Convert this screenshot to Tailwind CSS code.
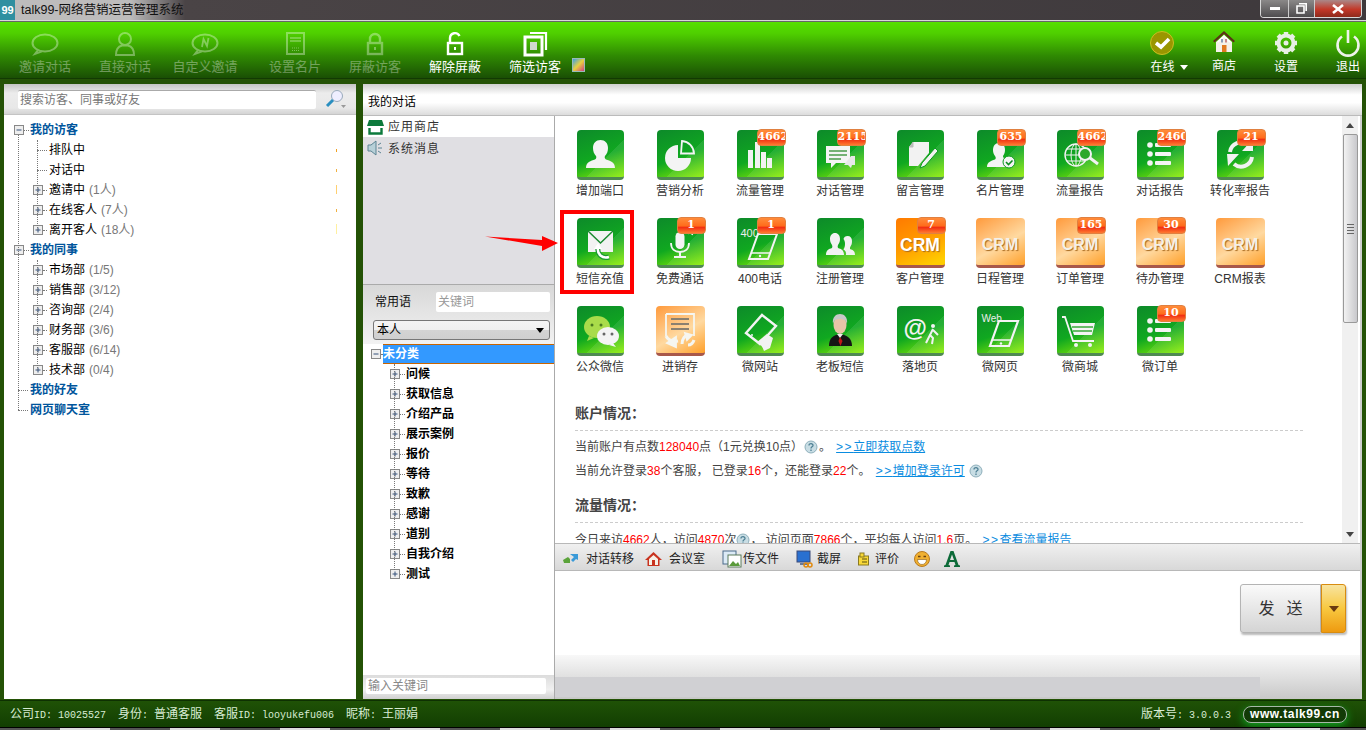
<!DOCTYPE html>
<html lang="zh-CN">
<head>
<meta charset="UTF-8">
<title>talk99-网络营销运营管理系统</title>
<script src="https://cdn.jsdelivr.net/npm/@tailwindcss/browser@4"></script>
</head>
<body class="w-[1366px] h-[730px] overflow-hidden flex flex-col bg-[#245206] text-[12px] text-black [font-family:'Liberation_Sans','Noto_Sans_CJK_SC',sans-serif]">

<svg class="hidden">
  <symbol id="plus" viewBox="0 0 10 10"><rect x=".5" y=".5" width="9" height="9" fill="#eee" stroke="#888"/><path d="M2.5 5h5M5 2.5v5" stroke="#35507a"/></symbol>
  <symbol id="minus" viewBox="0 0 10 10"><rect x=".5" y=".5" width="9" height="9" fill="#eee" stroke="#888"/><path d="M2.5 5h5" stroke="#35507a"/></symbol>
  <symbol id="help" viewBox="0 0 14 14"><circle cx="7" cy="7" r="6" fill="#c8dde4" stroke="#8fb0bc"/><path d="M5 5.400c0-2.400 4.200-2.200 4 .1-.1 1.400-2 1.300-2 2.900M7 9.600v1.500" fill="none" stroke="#4d7f93" stroke-width="1.300"/></symbol>
  <symbol id="list" viewBox="0 0 47 47"><g fill="#f4f4f4"><circle cx="13" cy="15" r="2.800"/><rect x="18" y="13" width="16" height="4" rx="1"/><circle cx="13" cy="24" r="2.800"/><rect x="18" y="22" width="16" height="4" rx="1"/><circle cx="13" cy="33" r="2.800"/><rect x="18" y="31" width="16" height="4" rx="1"/></g></symbol>
</svg>

<!-- title bar -->
<div class="h-[20px] flex items-start bg-[linear-gradient(90deg,#bdbcbc_0,#bdbcbc_130px,#4a4446_185px,#3e393c_100%)]">
  <div class="w-[15px] h-[20px] bg-[#2f8fa0] text-white text-[11px] font-bold leading-[20px] text-center">99</div>
  <div class="ml-[6px] leading-[20px] text-[12.5px] text-[#111]">talk99-网络营销运营管理系统</div>
  <div class="ml-auto mr-[4px] flex h-[18px] rounded-b-[4px] border border-t-0 border-[#d8d8d8] overflow-hidden">
    <div class="w-[28px] flex items-center justify-center bg-[linear-gradient(#8a8888,#4f4d4f)] border-r border-[#ccc]"><span class="w-[10px] h-[3px] bg-white"></span></div>
    <div class="w-[26px] flex items-center justify-center bg-[linear-gradient(#8a8888,#4f4d4f)] border-r border-[#ccc]">
      <svg width="11" height="11" viewBox="0 0 11 11"><path d="M3 .8h7.200v7.200M1 3h7v7H1z" fill="none" stroke="#fff" stroke-width="1.600"/></svg>
    </div>
    <div class="w-[46px] flex items-center justify-center bg-[linear-gradient(#a88,#c33828_55%,#8e2a1c)]">
      <svg width="14" height="10" viewBox="0 0 14 10"><path d="M2 1l10 8M12 1L2 9" stroke="#fff" stroke-width="2.600"/></svg>
    </div>
  </div>
</div>
<div class="h-[2px] bg-[#d8d8d8] border-b border-[#666]"></div>

<!-- toolbar -->
<div class="h-[57px] flex pl-[5px] overflow-hidden text-white text-[13px] leading-[14px] bg-[linear-gradient(#56e000_0%,#4fd000_20%,#2f8a02_60%,#1a4f04_100%)] border-b border-[#123a03]">
  <div class="w-[80px] pt-[6px] flex flex-col items-center opacity-35">
    <svg width="32" height="32" viewBox="0 0 32 32" fill="none" stroke="#fff" stroke-width="2"><ellipse cx="16" cy="15" rx="12.500" ry="8.500"/><path d="M9 22l-3 4 7-2.600"/></svg>
    <span>邀请对话</span>
  </div>
  <div class="w-[80px] pt-[6px] flex flex-col items-center opacity-35">
    <svg width="32" height="32" viewBox="0 0 32 32" fill="none" stroke="#fff" stroke-width="2"><circle cx="16" cy="11" r="6"/><path d="M7 27c0-7 4-9 6-9.500h6c2 .5 6 2.500 6 9.500z"/></svg>
    <span>直接对话</span>
  </div>
  <div class="w-[80px] pt-[6px] flex flex-col items-center opacity-35">
    <svg width="32" height="32" viewBox="0 0 32 32" fill="none" stroke="#fff" stroke-width="2"><ellipse cx="16" cy="15" rx="12.500" ry="8.500"/><path d="M9 22l-3 4 7-2.600"/><path d="M13 19l1.500-8 3.500 7 1.500-8" stroke-width="1.800"/></svg>
    <span>自定义邀请</span>
  </div>
  <div class="w-[80px] ml-[10px] pt-[6px] flex flex-col items-center opacity-35">
    <svg width="32" height="32" viewBox="0 0 32 32" fill="none" stroke="#fff" stroke-width="2"><rect x="8" y="5" width="17" height="21"/><path d="M11 10h11M11 13h11" stroke-width="1.400"/><path d="M13 20h7M13 22.500h7" stroke-dasharray="1 1" stroke-width="1.200"/></svg>
    <span>设置名片</span>
  </div>
  <div class="w-[80px] pt-[6px] flex flex-col items-center opacity-35">
    <svg width="32" height="32" viewBox="0 0 32 32" fill="none" stroke="#fff" stroke-width="2.400"><path d="M11 15v-4a5 5 0 0 1 10 0v4"/><rect x="9" y="15" width="14" height="11"/><rect x="15" y="19" width="2" height="3" fill="#fff" stroke="none"/></svg>
    <span>屏蔽访客</span>
  </div>
  <div class="w-[80px] pt-[6px] flex flex-col items-center">
    <svg width="32" height="32" viewBox="0 0 32 32" fill="none" stroke="#fff" stroke-width="2.400"><path d="M11 14v-4a5 5 0 0 1 9.500-2"/><rect x="9" y="15" width="14" height="11"/><rect x="15" y="19" width="2" height="3" fill="#fff" stroke="none"/></svg>
    <span>解除屏蔽</span>
  </div>
  <div class="w-[80px] pt-[6px] flex flex-col items-center">
    <svg width="32" height="32" viewBox="0 0 32 32" fill="none" stroke="#fff" stroke-width="2.200"><path d="M11 5h16v17"/><rect x="6" y="9" width="17" height="18" stroke-width="3"/><rect x="11" y="14" width="7" height="8" fill="#cfd8cf" stroke="none"/></svg>
    <span>筛选访客</span>
  </div>
  <div class="w-[13px] h-[14px] mt-[36px] -ml-[3px] border border-[#9bb] bg-[linear-gradient(135deg,#3aa0e8,#e8d040_50%,#d04080)]"></div>

  <div class="ml-auto w-[62px] pt-[5px] flex flex-col items-center text-[12px]">
    <svg width="32" height="32" viewBox="0 0 32 32"><circle cx="16" cy="16" r="11.500" fill="#9a9600" stroke="#c9bf20"/><path d="M10 16l5 4 8-8" fill="none" stroke="#fff" stroke-width="3.600"/></svg>
    <span class="mt-[1px] ml-[14px] flex items-center gap-[5px]">在线<i class="w-0 h-0 border-x-[4px] border-x-transparent border-t-[5px] border-t-white"></i></span>
  </div>
  <div class="w-[62px] pt-[4px] flex flex-col items-center text-[12px]">
    <svg width="32" height="32" viewBox="0 0 32 32"><path d="M16 5L5 15l1.500 1.500L16 8l9.500 8.500L27 15z" fill="#5b3416"/><path d="M8 16l8-7 8 7v10H8z" fill="#f4f1ea"/><path d="M10 16l6-6 6 6" fill="none" stroke="#fff" stroke-width="1.500"/><rect x="14" y="19" width="4.500" height="7" fill="#e07a20"/><rect x="13" y="13" width="2" height="3.500" fill="#8aa0b8"/><rect x="17" y="13" width="2" height="3.500" fill="#c98a8a"/></svg>
    <span class="mt-[1px]">商店</span>
  </div>
  <div class="w-[62px] pt-[5px] flex flex-col items-center text-[12px]">
    <svg width="32" height="32" viewBox="0 0 32 32"><circle cx="16" cy="16" r="7.500" fill="none" stroke="#e8efe4" stroke-width="4"/><path d="M16 5v4M16 23v4M5 16h4M23 16h4M8.200 8.200l2.900 2.900M20.900 20.900l2.900 2.900M23.800 8.200l-2.900 2.900M11.100 20.900l-2.900 2.900" stroke="#e8efe4" stroke-width="4.500"/><circle cx="16" cy="16" r="2.500" fill="#e8efe4"/></svg>
    <span class="mt-[1px]">设置</span>
  </div>
  <div class="w-[36px] ml-[13px] pt-[5px] flex flex-col items-center text-[12px]">
    <svg width="32" height="32" viewBox="0 0 32 32" fill="none" stroke="#eef3ea" stroke-width="2.600"><path d="M10 9.500a10.500 10.500 0 1 0 12 0"/><path d="M16 3v13"/></svg>
    <span class="mt-[1px]">退出</span>
  </div>
</div>

<!-- main -->
<div class="h-[621px] flex pt-[5px] pb-[1px]">
  <!-- visitors panel -->
  <div class="w-[352px] ml-[4px] flex flex-col bg-white">
    <div class="h-[31px] flex items-center pl-[14px] border-b border-[#c4c4c4] bg-[linear-gradient(#c4c4c4,#ececec_30%,#e8e8e8_80%,#d4d4d4)]">
      <div class="w-[298px] h-[19px] leading-[19px] pl-[2px] bg-white border-t border-[#aaa] text-[#777] text-[12px] rounded-[2px]">搜索访客、同事或好友</div>
      <svg class="ml-[7px]" width="24" height="22" viewBox="0 0 24 22"><circle cx="14" cy="8" r="5.500" fill="#eef" stroke="#9ab"/><path d="M10 12l-6 6" stroke="#2a8fc0" stroke-width="3"/><path d="M18 17h5l-2.500 3z" fill="#999"/></svg>
    </div>
    <div class="relative flex-1 pt-[5px]">
      <div class="absolute left-[14px] top-[20px] h-[275px] border-l border-dotted border-[#777]"></div>
      <div class="absolute left-[33px] top-[25px] h-[90px] border-l border-dotted border-[#777]"></div>
      <div class="absolute left-[33px] top-[145px] h-[110px] border-l border-dotted border-[#777]"></div>
      <div class="absolute left-[332px] top-[34px] w-[1px] h-[3px] bg-[#f0a020]"></div>
      <div class="absolute left-[332px] top-[54px] w-[1px] h-[3px] bg-[#f0b040]"></div>
      <div class="absolute left-[332px] top-[70px] w-[1px] h-[9px] bg-[#ffd070]"></div>
      <div class="absolute left-[332px] top-[94px] w-[1px] h-[3px] bg-[#f0b040]"></div>
      <div class="absolute left-[332px] top-[109px] w-[1px] h-[10px] bg-[#fff0a0]"></div>

      <div class="h-[20px] flex items-center pl-[10px]"><svg width="10" height="10"><use href="#minus"/></svg><span class="w-[5px] mr-[1px] border-t border-dotted border-[#777]"></span><b class="text-[#00559c]">我的访客</b></div>
      <div class="h-[20px] flex items-center pl-[33px]"><span class="w-[10px] mr-[2px] border-t border-dotted border-[#777]"></span>排队中</div>
      <div class="h-[20px] flex items-center pl-[33px]"><span class="w-[10px] mr-[2px] border-t border-dotted border-[#777]"></span>对话中</div>
      <div class="h-[20px] flex items-center pl-[29px]"><svg width="10" height="10"><use href="#plus"/></svg><span class="w-[4px] mr-[2px] border-t border-dotted border-[#777]"></span>邀请中<span class="ml-[4px] text-[#777]">(1人)</span></div>
      <div class="h-[20px] flex items-center pl-[29px]"><svg width="10" height="10"><use href="#plus"/></svg><span class="w-[4px] mr-[2px] border-t border-dotted border-[#777]"></span>在线客人<span class="ml-[4px] text-[#777]">(7人)</span></div>
      <div class="h-[20px] flex items-center pl-[29px]"><svg width="10" height="10"><use href="#plus"/></svg><span class="w-[4px] mr-[2px] border-t border-dotted border-[#777]"></span>离开客人<span class="ml-[4px] text-[#777]">(18人)</span></div>
      <div class="h-[20px] flex items-center pl-[10px]"><svg width="10" height="10"><use href="#minus"/></svg><span class="w-[5px] mr-[1px] border-t border-dotted border-[#777]"></span><b class="text-[#00559c]">我的同事</b></div>
      <div class="h-[20px] flex items-center pl-[29px]"><svg width="10" height="10"><use href="#plus"/></svg><span class="w-[4px] mr-[2px] border-t border-dotted border-[#777]"></span>市场部<span class="ml-[4px] text-[#777]">(1/5)</span></div>
      <div class="h-[20px] flex items-center pl-[29px]"><svg width="10" height="10"><use href="#plus"/></svg><span class="w-[4px] mr-[2px] border-t border-dotted border-[#777]"></span>销售部<span class="ml-[4px] text-[#777]">(3/12)</span></div>
      <div class="h-[20px] flex items-center pl-[29px]"><svg width="10" height="10"><use href="#plus"/></svg><span class="w-[4px] mr-[2px] border-t border-dotted border-[#777]"></span>咨询部<span class="ml-[4px] text-[#777]">(2/4)</span></div>
      <div class="h-[20px] flex items-center pl-[29px]"><svg width="10" height="10"><use href="#plus"/></svg><span class="w-[4px] mr-[2px] border-t border-dotted border-[#777]"></span>财务部<span class="ml-[4px] text-[#777]">(3/6)</span></div>
      <div class="h-[20px] flex items-center pl-[29px]"><svg width="10" height="10"><use href="#plus"/></svg><span class="w-[4px] mr-[2px] border-t border-dotted border-[#777]"></span>客服部<span class="ml-[4px] text-[#777]">(6/14)</span></div>
      <div class="h-[20px] flex items-center pl-[29px]"><svg width="10" height="10"><use href="#plus"/></svg><span class="w-[4px] mr-[2px] border-t border-dotted border-[#777]"></span>技术部<span class="ml-[4px] text-[#777]">(0/4)</span></div>
      <div class="h-[20px] flex items-center pl-[14px]"><span class="w-[10px] mr-[2px] border-t border-dotted border-[#777]"></span><b class="text-[#00559c]">我的好友</b></div>
      <div class="h-[20px] flex items-center pl-[14px]"><span class="w-[10px] mr-[2px] border-t border-dotted border-[#777]"></span><b class="text-[#00559c]">网页聊天室</b></div>
    </div>
  </div>

  <!-- conversation panel -->
  <div class="w-[999px] ml-[7px] flex flex-col">
    <div class="h-[32px] pl-[5px] pt-[6px] leading-[24px] border-b border-[#bbb] bg-[linear-gradient(#cfcfcf,#ffffff_35%,#ffffff_60%,#dcdcdc)]">我的对话</div>
    <div class="h-[583px] flex">
      <!-- middle column -->
      <div class="w-[192px] flex flex-col border-r border-[#aaa] bg-white">
        <div class="h-[21px] flex items-center pl-[4px] pt-[1px] text-[#333] bg-white">
          <svg width="17" height="15" viewBox="0 0 17 15"><path d="M2 0h13l2 6H0z" fill="#0c7a3c"/><path d="M2.500 8v5.500h12V8" fill="none" stroke="#0c7a3c" stroke-width="2.400"/></svg>
          <span class="ml-[4px] tracking-[1px]">应用商店</span>
        </div>
        <div class="h-[147px] flex items-start pl-[4px] pt-[3px] text-[#333] bg-[#e0dfe3]">
          <svg width="17" height="16" viewBox="0 0 17 16"><path d="M1 5h3l5-4v14l-5-4H1z" fill="#b8d0d8" stroke="#5c8494"/><path d="M11 5l3-2M11 8h4M11 11l3 2" stroke="#5c8494"/></svg>
          <span class="ml-[4px] tracking-[1px]">系统消息</span>
        </div>
        <div class="h-[1px] bg-[#aaa]"></div>
        <div class="h-[59px] pl-[10px] pt-[7px] bg-[linear-gradient(#d8d8d8,#f2f2f2)]">
          <div class="flex items-center h-[20px] pl-[2px]">
            <span class="w-[61px] shrink-0 text-[#111]">常用语</span>
            <div class="w-[114px] shrink-0 h-[20px] leading-[20px] pl-[2px] bg-white text-[#999] text-[12px] rounded-[2px]">关键词</div>
          </div>
          <div class="mt-[8px] h-[20px] w-[177px] flex items-center justify-between px-[3px] border border-[#777] rounded-[3px] bg-[linear-gradient(#f4f4f4,#f0f0f0_50%,#d4d4d4_52%,#cfcfcf)]">
            <span>本人</span><i class="w-0 h-0 mr-[2px] border-x-[4px] border-x-transparent border-t-[5px] border-t-black"></i>
          </div>
        </div>
        <div class="relative h-[331px]">
          <div class="absolute left-[31px] top-[20px] h-[206px] border-l border-dotted border-[#777]"></div>
          <div class="h-[20px] flex items-center pl-[8px]">
            <svg width="10" height="10"><use href="#minus"/></svg><span class="w-[2px] border-t border-dotted border-[#777]"></span>
            <b class="flex-1 h-[20px] leading-[18px] text-white bg-[#3399ff] border-y border-[#c86400]">未分类</b>
          </div>
          <div class="h-[20px] flex items-center pl-[27px]"><svg width="10" height="10"><use href="#plus"/></svg><span class="w-[5px] mr-[1px] border-t border-dotted border-[#777]"></span><b>问候</b></div>
          <div class="h-[20px] flex items-center pl-[27px]"><svg width="10" height="10"><use href="#plus"/></svg><span class="w-[5px] mr-[1px] border-t border-dotted border-[#777]"></span><b>获取信息</b></div>
          <div class="h-[20px] flex items-center pl-[27px]"><svg width="10" height="10"><use href="#plus"/></svg><span class="w-[5px] mr-[1px] border-t border-dotted border-[#777]"></span><b>介绍产品</b></div>
          <div class="h-[20px] flex items-center pl-[27px]"><svg width="10" height="10"><use href="#plus"/></svg><span class="w-[5px] mr-[1px] border-t border-dotted border-[#777]"></span><b>展示案例</b></div>
          <div class="h-[20px] flex items-center pl-[27px]"><svg width="10" height="10"><use href="#plus"/></svg><span class="w-[5px] mr-[1px] border-t border-dotted border-[#777]"></span><b>报价</b></div>
          <div class="h-[20px] flex items-center pl-[27px]"><svg width="10" height="10"><use href="#plus"/></svg><span class="w-[5px] mr-[1px] border-t border-dotted border-[#777]"></span><b>等待</b></div>
          <div class="h-[20px] flex items-center pl-[27px]"><svg width="10" height="10"><use href="#plus"/></svg><span class="w-[5px] mr-[1px] border-t border-dotted border-[#777]"></span><b>致歉</b></div>
          <div class="h-[20px] flex items-center pl-[27px]"><svg width="10" height="10"><use href="#plus"/></svg><span class="w-[5px] mr-[1px] border-t border-dotted border-[#777]"></span><b>感谢</b></div>
          <div class="h-[20px] flex items-center pl-[27px]"><svg width="10" height="10"><use href="#plus"/></svg><span class="w-[5px] mr-[1px] border-t border-dotted border-[#777]"></span><b>道别</b></div>
          <div class="h-[20px] flex items-center pl-[27px]"><svg width="10" height="10"><use href="#plus"/></svg><span class="w-[5px] mr-[1px] border-t border-dotted border-[#777]"></span><b>自我介绍</b></div>
          <div class="h-[20px] flex items-center pl-[27px]"><svg width="10" height="10"><use href="#plus"/></svg><span class="w-[5px] mr-[1px] border-t border-dotted border-[#777]"></span><b>测试</b></div>
        </div>
        <div class="h-[24px] pl-[3px] pt-[3px] bg-[linear-gradient(#dcdcdc,#f0f0f0_60%,#d0d0d0)]">
          <div class="w-[180px] h-[16px] leading-[16px] pl-[2px] bg-white text-[#888] rounded-[2px]">输入关键词</div>
        </div>
      </div>

      <!-- app area -->
      <div class="w-[807px] flex flex-col border-r-2 border-[#cfcfcf]">
        <div class="h-[427px] flex bg-white overflow-hidden">
          <div class="w-[789px] pt-[14px] overflow-hidden">
            <div class="ml-[5px] grid grid-cols-[repeat(9,80px)] auto-rows-[88px] text-center text-[#333]">

              <div><div class="relative mx-auto w-[47px] h-[50px] rounded-[4px] border-b-[3px] border-[#4f8a52] bg-[linear-gradient(135deg,transparent_60%,#ffffff18_60%),linear-gradient(160deg,#0d8a2a_0%,#10a820_55%,#8eee04_100%)]">
                <svg class="absolute inset-0" width="47" height="47" viewBox="0 0 47 47"><path d="M9 38c0-6 5-7 9-8.500 1.500-.7 1.500-2.500 1-3.500-2-2-3-5-3-8 0-5 3-8 7.500-8s7.500 3 7.500 8c0 3-1 6-3 8-.5 1-.5 2.800 1 3.500 4 1.500 9 2.500 9 8.500z" fill="#f4f4f4"/></svg>
              </div><div class="h-[20px] leading-[22px]">增加端口</div></div>

              <div><div class="relative mx-auto w-[47px] h-[50px] rounded-[4px] border-b-[3px] border-[#4f8a52] bg-[linear-gradient(135deg,transparent_60%,#ffffff18_60%),linear-gradient(160deg,#0d8a2a_0%,#10a820_55%,#8eee04_100%)]">
                <svg class="absolute inset-0" width="47" height="47" viewBox="0 0 47 47"><path d="M21 15a13 13 0 1 0 13 13H21z" fill="#f4f4f4"/><path d="M25 11a13 13 0 0 1 12 12.500H24z" fill="none" stroke="#f4f4f4" stroke-width="1.800"/></svg>
              </div><div class="h-[20px] leading-[22px]">营销分析</div></div>

              <div><div class="relative mx-auto w-[47px] h-[50px] rounded-[4px] border-b-[3px] border-[#4f8a52] bg-[linear-gradient(135deg,transparent_60%,#ffffff18_60%),linear-gradient(160deg,#0d8a2a_0%,#10a820_55%,#8eee04_100%)]">
                <svg class="absolute inset-0" width="47" height="47" viewBox="0 0 47 47"><g fill="#f2f2f2"><rect x="11" y="20" width="5" height="18"/><rect x="18" y="12" width="5" height="26"/><rect x="24" y="22" width="5" height="16"/><rect x="30" y="28" width="5" height="10"/></g></svg>
                <div class="absolute top-[-1px] right-[-2px] w-[29px] h-[17px] overflow-hidden rounded-[4px] border border-[#e08040] bg-[linear-gradient(#ff8c3a,#ff6a1a_55%,#f02a10_60%,#ff7a30)] text-white font-bold text-[11px] leading-[14px] whitespace-nowrap [font-family:'DejaVu_Serif',serif]">4662</div>
              </div><div class="h-[20px] leading-[22px]">流量管理</div></div>

              <div><div class="relative mx-auto w-[47px] h-[50px] rounded-[4px] border-b-[3px] border-[#4f8a52] bg-[linear-gradient(135deg,transparent_60%,#ffffff18_60%),linear-gradient(160deg,#0d8a2a_0%,#10a820_55%,#8eee04_100%)]">
                <svg class="absolute inset-0" width="47" height="47" viewBox="0 0 47 47"><path d="M9 16h24v17H19l-5 5v-5H9z" fill="#f4f4f4"/><path d="M12 21h18M12 25h18M12 29h12" stroke="#4a9a4a" stroke-width="1.500"/><path d="M34 26h4v9h-3l-1 3-3-3h-4" fill="#e8e8e8"/></svg>
                <div class="absolute top-[-1px] right-[-2px] w-[29px] h-[17px] overflow-hidden rounded-[4px] border border-[#e08040] bg-[linear-gradient(#ff8c3a,#ff6a1a_55%,#f02a10_60%,#ff7a30)] text-white font-bold text-[11px] leading-[14px] whitespace-nowrap [font-family:'DejaVu_Serif',serif]">2115</div>
              </div><div class="h-[20px] leading-[22px]">对话管理</div></div>

              <div><div class="relative mx-auto w-[47px] h-[50px] rounded-[4px] border-b-[3px] border-[#4f8a52] bg-[linear-gradient(135deg,transparent_60%,#ffffff18_60%),linear-gradient(160deg,#0d8a2a_0%,#10a820_55%,#8eee04_100%)]">
                <svg class="absolute inset-0" width="47" height="47" viewBox="0 0 47 47"><path d="M16 12h16v11L21 36h-9V17z" fill="#f2f2f2"/><path d="M16 12v5h-4" fill="#bbb" stroke="#bbb"/><path d="M38 18l3 3-13 15-5 2 2-5z" fill="#f2f2f2" stroke="#0c9a20"/></svg>
              </div><div class="h-[20px] leading-[22px]">留言管理</div></div>

              <div><div class="relative mx-auto w-[47px] h-[50px] rounded-[4px] border-b-[3px] border-[#4f8a52] bg-[linear-gradient(135deg,transparent_60%,#ffffff18_60%),linear-gradient(160deg,#0d8a2a_0%,#10a820_55%,#8eee04_100%)]">
                <svg class="absolute inset-0" width="47" height="47" viewBox="0 0 47 47"><path d="M10 37c0-5 4-6 8-7.500 1-1 1-2 0-3.500-1.500-2-2-4-2-6 0-4 2-7 6-7s6 3 6 7c0 2-.5 4-2 6 0 1 .5 2 2 3v8z" fill="#f4f4f4"/><circle cx="32" cy="32" r="6" fill="#f4f4f4" stroke="#0c9a20"/><path d="M29 32l2.500 2.500 4-4" fill="none" stroke="#0c8a20" stroke-width="1.600"/></svg>
                <div class="absolute top-[-1px] right-[-2px] w-[29px] h-[17px] overflow-hidden rounded-[4px] border border-[#e08040] bg-[linear-gradient(#ff8c3a,#ff6a1a_55%,#f02a10_60%,#ff7a30)] text-white font-bold text-[11px] leading-[14px] whitespace-nowrap [font-family:'DejaVu_Serif',serif]">635</div>
              </div><div class="h-[20px] leading-[22px]">名片管理</div></div>

              <div><div class="relative mx-auto w-[47px] h-[50px] rounded-[4px] border-b-[3px] border-[#4f8a52] bg-[linear-gradient(135deg,transparent_60%,#ffffff18_60%),linear-gradient(160deg,#0d8a2a_0%,#10a820_55%,#8eee04_100%)]">
                <svg class="absolute inset-0" width="47" height="47" viewBox="0 0 47 47" fill="none" stroke="#f2f2f2"><circle cx="19" cy="25" r="11" stroke-width="1.400"/><ellipse cx="19" cy="25" rx="5" ry="11"/><path d="M8 25h22M10 19h18M10 31h18M19 14v22"/><circle cx="28" cy="24" r="6" fill="#2ca82a" stroke-width="2"/><path d="M33 28l8 6" stroke-width="3"/></svg>
                <div class="absolute top-[-1px] right-[-2px] w-[29px] h-[17px] overflow-hidden rounded-[4px] border border-[#e08040] bg-[linear-gradient(#ff8c3a,#ff6a1a_55%,#f02a10_60%,#ff7a30)] text-white font-bold text-[11px] leading-[14px] whitespace-nowrap [font-family:'DejaVu_Serif',serif]">4662</div>
              </div><div class="h-[20px] leading-[22px]">流量报告</div></div>

              <div><div class="relative mx-auto w-[47px] h-[50px] rounded-[4px] border-b-[3px] border-[#4f8a52] bg-[linear-gradient(135deg,transparent_60%,#ffffff18_60%),linear-gradient(160deg,#0d8a2a_0%,#10a820_55%,#8eee04_100%)]">
                <svg class="absolute inset-0" width="47" height="47"><use href="#list"/></svg>
                <div class="absolute top-[-1px] right-[-2px] w-[29px] h-[17px] overflow-hidden rounded-[4px] border border-[#e08040] bg-[linear-gradient(#ff8c3a,#ff6a1a_55%,#f02a10_60%,#ff7a30)] text-white font-bold text-[11px] leading-[14px] whitespace-nowrap [font-family:'DejaVu_Serif',serif]">2460</div>
              </div><div class="h-[20px] leading-[22px]">对话报告</div></div>

              <div><div class="relative mx-auto w-[47px] h-[50px] rounded-[4px] border-b-[3px] border-[#4f8a52] bg-[linear-gradient(135deg,transparent_60%,#ffffff18_60%),linear-gradient(160deg,#0d8a2a_0%,#10a820_55%,#8eee04_100%)]">
                <svg class="absolute inset-0" width="47" height="47" viewBox="0 0 47 47"><path d="M13 22a11 11 0 0 1 18-7" fill="none" stroke="#f2f2f2" stroke-width="4"/><path d="M36 9v12H25z" fill="#f2f2f2"/><path d="M35 27a11 11 0 0 1-18 7" fill="none" stroke="#f2f2f2" stroke-width="4"/><path d="M10 24h12L11 36z" fill="#f2f2f2"/></svg>
                <div class="absolute top-[-1px] right-[-2px] w-[29px] h-[17px] overflow-hidden rounded-[4px] border border-[#e08040] bg-[linear-gradient(#ff8c3a,#ff6a1a_55%,#f02a10_60%,#ff7a30)] text-white font-bold text-[11px] leading-[14px] whitespace-nowrap [font-family:'DejaVu_Serif',serif]">21</div>
              </div><div class="h-[20px] leading-[22px]">转化率报告</div></div>

              <!-- row 2 -->
              <div><div class="relative mx-auto w-[47px] h-[50px] rounded-[4px] border-b-[3px] border-[#4f8a52] bg-[linear-gradient(135deg,transparent_60%,#ffffff18_60%),linear-gradient(160deg,#0d8a2a_0%,#10a820_55%,#8eee04_100%)]">
                <svg class="absolute inset-0" width="47" height="47" viewBox="0 0 47 47"><path d="M11 13h25v21H11z" fill="#f2f2f2"/><path d="M11 13l12.500 12L36 13" fill="none" stroke="#1a8a30" stroke-width="1.500"/><path d="M21 30c-1 6 4 11 11 9" fill="none" stroke="#1a9a30" stroke-width="5"/><path d="M21 30c-1 6 4 11 11 9" fill="none" stroke="#fff" stroke-width="2.500"/><path d="M21 25l-4 6h8z" fill="#fff"/></svg>
              </div><div class="h-[20px] leading-[22px]">短信充值</div></div>

              <div><div class="relative mx-auto w-[47px] h-[50px] rounded-[4px] border-b-[3px] border-[#4f8a52] bg-[linear-gradient(135deg,transparent_60%,#ffffff18_60%),linear-gradient(160deg,#0d8a2a_0%,#10a820_55%,#8eee04_100%)]">
                <svg class="absolute inset-0" width="47" height="47" viewBox="0 0 47 47"><rect x="18.500" y="14" width="9" height="17" rx="4.500" fill="#f4f4f4"/><path d="M14 25c0 6 4 9 9 9s9-3 9-9" fill="none" stroke="#f4f4f4" stroke-width="1.800"/><path d="M23 34v5M17 39h12" stroke="#f4f4f4" stroke-width="2"/><path d="M31 16l1-2M35 17l1-3" stroke="#f4f4f4" stroke-width="1.500"/></svg>
                <div class="absolute top-[-1px] right-[-2px] w-[29px] h-[17px] overflow-hidden rounded-[4px] border border-[#e08040] bg-[linear-gradient(#ff8c3a,#ff6a1a_55%,#f02a10_60%,#ff7a30)] text-white font-bold text-[11px] leading-[14px] whitespace-nowrap [font-family:'DejaVu_Serif',serif]">1</div>
              </div><div class="h-[20px] leading-[22px]">免费通话</div></div>

              <div><div class="relative mx-auto w-[47px] h-[50px] rounded-[4px] border-b-[3px] border-[#4f8a52] bg-[linear-gradient(135deg,transparent_60%,#ffffff18_60%),linear-gradient(160deg,#0d8a2a_0%,#10a820_55%,#8eee04_100%)]">
                <span class="absolute left-[4px] top-[9px] text-[11px] leading-[12px] text-[#eee]">400</span>
                <svg class="absolute inset-0" width="47" height="47" viewBox="0 0 47 47"><path d="M21 16h19l-9 25H12z" fill="none" stroke="#f4f4f4" stroke-width="2"/><path d="M14 35h19" stroke="#f4f4f4" stroke-width="1.500"/><circle cx="23" cy="38" r="1.200" fill="#f4f4f4"/></svg>
                <div class="absolute top-[-1px] right-[-2px] w-[29px] h-[17px] overflow-hidden rounded-[4px] border border-[#e08040] bg-[linear-gradient(#ff8c3a,#ff6a1a_55%,#f02a10_60%,#ff7a30)] text-white font-bold text-[11px] leading-[14px] whitespace-nowrap [font-family:'DejaVu_Serif',serif]">1</div>
              </div><div class="h-[20px] leading-[22px]">400电话</div></div>

              <div><div class="relative mx-auto w-[47px] h-[50px] rounded-[4px] border-b-[3px] border-[#4f8a52] bg-[linear-gradient(135deg,transparent_60%,#ffffff18_60%),linear-gradient(160deg,#0d8a2a_0%,#10a820_55%,#8eee04_100%)]">
                <svg class="absolute inset-0" width="47" height="47" viewBox="0 0 47 47"><g fill="#f2f2f2"><path d="M9 37c0-5 3-6 6-7 .5-1 .5-2 0-3-1-1.500-2-3-2-6 0-3.500 2-6 5-6s5 2.500 5 6c0 3-1 4.500-2 6-.5 1-.5 2 0 3 3 1 6 2 6 7z"/><path d="M29 37h9c0-4-2-5-5-6 0-1 0-2 .5-2.500 1-1.500 1.500-3 1.500-5.500 0-3-1.500-5-4.500-5-2 0-3.500 1-4 3 1 1 1.500 3 1.500 5 0 2-.5 4-1.500 5.500 2 1 3 3 2.500 5.500z"/></g></svg>
              </div><div class="h-[20px] leading-[22px]">注册管理</div></div>

              <div><div class="relative mx-auto w-[49px] h-[50px] rounded-[4px] border-b-[3px] border-[#a8584a] bg-[linear-gradient(155deg,#ff7a00,#ff9c00_50%,#ffcc00_90%)] text-white">
                <span class="absolute left-0 right-0 top-[17px] text-[17.5px] leading-[20px] font-bold [text-shadow:1px_1px_1px_#a86a20] [font-family:'Liberation_Sans',sans-serif]">CRM</span>
                <div class="absolute top-[-1px] right-[-1px] w-[29px] h-[17px] overflow-hidden rounded-[4px] border border-[#e08040] bg-[linear-gradient(#ff8c3a,#ff6a1a_55%,#f02a10_60%,#ff7a30)] text-white font-bold text-[11px] leading-[14px] whitespace-nowrap [font-family:'DejaVu_Serif',serif]">7</div>
              </div><div class="h-[20px] leading-[22px]">客户管理</div></div>

              <div><div class="relative mx-auto w-[49px] h-[50px] rounded-[4px] border-b-[3px] border-[#a8584a] bg-[linear-gradient(150deg,#ff9a3c,#ffd9a0_55%,#ffa02a)] text-[#f4f0e8]">
                <span class="absolute left-0 right-0 top-[17px] text-[16px] leading-[20px] font-bold [text-shadow:1px_1px_1px_#a86a20] [font-family:'Liberation_Sans',sans-serif]">CRM</span>
              </div><div class="h-[20px] leading-[22px]">日程管理</div></div>

              <div><div class="relative mx-auto w-[49px] h-[50px] rounded-[4px] border-b-[3px] border-[#a8584a] bg-[linear-gradient(150deg,#ff9a3c,#ffd9a0_55%,#ffa02a)] text-[#f4f0e8]">
                <span class="absolute left-0 right-0 top-[17px] text-[16px] leading-[20px] font-bold [text-shadow:1px_1px_1px_#a86a20] [font-family:'Liberation_Sans',sans-serif]">CRM</span>
                <div class="absolute top-[-1px] right-[-1px] w-[29px] h-[17px] overflow-hidden rounded-[4px] border border-[#e08040] bg-[linear-gradient(#ff8c3a,#ff6a1a_55%,#f02a10_60%,#ff7a30)] text-white font-bold text-[11px] leading-[14px] whitespace-nowrap [font-family:'DejaVu_Serif',serif]">165</div>
              </div><div class="h-[20px] leading-[22px]">订单管理</div></div>

              <div><div class="relative mx-auto w-[49px] h-[50px] rounded-[4px] border-b-[3px] border-[#a8584a] bg-[linear-gradient(150deg,#ff9a3c,#ffd9a0_55%,#ffa02a)] text-[#f4f0e8]">
                <span class="absolute left-0 right-0 top-[17px] text-[16px] leading-[20px] font-bold [text-shadow:1px_1px_1px_#a86a20] [font-family:'Liberation_Sans',sans-serif]">CRM</span>
                <div class="absolute top-[-1px] right-[-1px] w-[29px] h-[17px] overflow-hidden rounded-[4px] border border-[#e08040] bg-[linear-gradient(#ff8c3a,#ff6a1a_55%,#f02a10_60%,#ff7a30)] text-white font-bold text-[11px] leading-[14px] whitespace-nowrap [font-family:'DejaVu_Serif',serif]">30</div>
              </div><div class="h-[20px] leading-[22px]">待办管理</div></div>

              <div><div class="relative mx-auto w-[49px] h-[50px] rounded-[4px] border-b-[3px] border-[#a8584a] bg-[linear-gradient(150deg,#ff9a3c,#ffd9a0_55%,#ffa02a)] text-[#f4f0e8]">
                <span class="absolute left-0 right-0 top-[17px] text-[16px] leading-[20px] font-bold [text-shadow:1px_1px_1px_#a86a20] [font-family:'Liberation_Sans',sans-serif]">CRM</span>
              </div><div class="h-[20px] leading-[22px]">CRM报表</div></div>

              <!-- row 3 -->
              <div><div class="relative mx-auto w-[47px] h-[50px] rounded-[4px] border-b-[3px] border-[#4f8a52] bg-[linear-gradient(135deg,transparent_60%,#ffffff18_60%),linear-gradient(160deg,#0d8a2a_0%,#10a820_55%,#8eee04_100%)]">
                <svg class="absolute inset-0" width="47" height="47" viewBox="0 0 47 47"><ellipse cx="20" cy="21" rx="13" ry="11" fill="#a9dc4a"/><path d="M12 30l-2 5 7-3z" fill="#a9dc4a"/><circle cx="15" cy="19" r="1.500" fill="#4a7a20"/><circle cx="24" cy="19" r="1.500" fill="#4a7a20"/><ellipse cx="31" cy="30" rx="11" ry="9" fill="#f4f4f4"/><path d="M36 37l3 4-7-2z" fill="#f4f4f4"/><circle cx="27" cy="28" r="1.500" fill="#666"/><circle cx="35" cy="28" r="1.500" fill="#666"/></svg>
              </div><div class="h-[20px] leading-[22px]">公众微信</div></div>

              <div><div class="relative mx-auto w-[49px] h-[50px] rounded-[4px] border-b-[3px] border-[#a8584a] bg-[linear-gradient(150deg,#ff9a3c,#ffd9a0_55%,#ffa02a)]">
                <svg class="absolute inset-0" width="49" height="47" viewBox="0 0 49 47" fill="none" stroke="#f6f6f0" stroke-width="1.800"><path d="M10 8h28v22M10 8v22"/><path d="M15 13h18M15 18h18M15 23h18" stroke="#8a8070"/><path d="M10 30c2 4 6 6 12 5" stroke-width="3"/><path d="M11 37l9-6v10z" fill="#f6f6f0"/><path d="M26 38c0-5 3-9 6-9" stroke-width="3"/><path d="M38 34c-1 3-3 5-6 5" stroke-width="3"/><path d="M29 27l7 2-5 5z" fill="#f6f6f0"/></svg>
              </div><div class="h-[20px] leading-[22px]">进销存</div></div>

              <div><div class="relative mx-auto w-[47px] h-[50px] rounded-[4px] border-b-[3px] border-[#4f8a52] bg-[linear-gradient(135deg,transparent_60%,#ffffff18_60%),linear-gradient(160deg,#0d8a2a_0%,#10a820_55%,#8eee04_100%)]">
                <svg class="absolute inset-0" width="47" height="47" viewBox="0 0 47 47"><path d="M9 27L25 9l14 11-16 18z" fill="none" stroke="#f4f4f4" stroke-width="2.400"/><path d="M20 36c4 2 6 6 7 9l6-3 3-10-6-4z" fill="#f2f2f2"/><circle cx="15" cy="29" r="1" fill="#f4f4f4"/></svg>
              </div><div class="h-[20px] leading-[22px]">微网站</div></div>

              <div><div class="relative mx-auto w-[47px] h-[50px] rounded-[4px] border-b-[3px] border-[#4f8a52] bg-[linear-gradient(135deg,transparent_60%,#ffffff18_60%),linear-gradient(160deg,#0d8a2a_0%,#10a820_55%,#8eee04_100%)]">
                <svg class="absolute inset-0" width="47" height="47" viewBox="0 0 47 47"><path d="M12 40c0-8 4-11 11-12 7 1 12 4 12 12z" fill="#151515"/><path d="M20 28l3 4 3-4z" fill="#eee"/><path d="M23 31l-1.500 4 2 5 2-5z" fill="#c01818"/><ellipse cx="23" cy="19" rx="6.500" ry="9" fill="#e8c4a8"/><path d="M16 18c-1-7 3-10 7-10s8 3 7 10c-1-4-3-5-7-5s-6 1-7 5z" fill="#c8c8c8"/></svg>
              </div><div class="h-[20px] leading-[22px]">老板短信</div></div>

              <div><div class="relative mx-auto w-[47px] h-[50px] rounded-[4px] border-b-[3px] border-[#4f8a52] bg-[linear-gradient(135deg,transparent_60%,#ffffff18_60%),linear-gradient(160deg,#0d8a2a_0%,#10a820_55%,#8eee04_100%)]">
                <span class="absolute left-[7px] top-[9px] text-[24px] leading-[26px] font-bold text-[#f2f2f2]">@</span>
                <svg class="absolute inset-0" width="47" height="47" viewBox="0 0 47 47"><circle cx="36" cy="20" r="2" fill="#f2f2f2"/><path d="M36 23l-3 6 3 3-1 6M33 29l-4 8M36 24l5 5" fill="none" stroke="#f2f2f2" stroke-width="2"/></svg>
              </div><div class="h-[20px] leading-[22px]">落地页</div></div>

              <div><div class="relative mx-auto w-[47px] h-[50px] rounded-[4px] border-b-[3px] border-[#4f8a52] bg-[linear-gradient(135deg,transparent_60%,#ffffff18_60%),linear-gradient(160deg,#0d8a2a_0%,#10a820_55%,#8eee04_100%)]">
                <span class="absolute left-[5px] top-[7px] text-[10px] leading-[12px] text-[#eee]">Web</span>
                <svg class="absolute inset-0" width="47" height="47" viewBox="0 0 47 47"><path d="M22 15h19l-9 25H13z" fill="none" stroke="#f4f4f4" stroke-width="2.200"/><path d="M15 34h19" stroke="#f4f4f4" stroke-width="1.500"/><circle cx="24" cy="37.500" r="1.200" fill="#f4f4f4"/></svg>
              </div><div class="h-[20px] leading-[22px]">微网页</div></div>

              <div><div class="relative mx-auto w-[47px] h-[50px] rounded-[4px] border-b-[3px] border-[#4f8a52] bg-[linear-gradient(135deg,transparent_60%,#ffffff18_60%),linear-gradient(160deg,#0d8a2a_0%,#10a820_55%,#8eee04_100%)]">
                <svg class="absolute inset-0" width="47" height="47" viewBox="0 0 47 47"><path d="M5 11h3l8 24h21" fill="none" stroke="#f4f4f4" stroke-width="1.800"/><path d="M13 17h25l-3 12H17z" fill="#f4f4f4"/><path d="M15 21h21M16 25h19" stroke="#3aa83a" stroke-width="1.500"/><circle cx="19" cy="39" r="2" fill="#f4f4f4"/><circle cx="33" cy="39" r="2" fill="#f4f4f4"/></svg>
              </div><div class="h-[20px] leading-[22px]">微商城</div></div>

              <div><div class="relative mx-auto w-[47px] h-[50px] rounded-[4px] border-b-[3px] border-[#4f8a52] bg-[linear-gradient(135deg,transparent_60%,#ffffff18_60%),linear-gradient(160deg,#0d8a2a_0%,#10a820_55%,#8eee04_100%)]">
                <svg class="absolute inset-0" width="47" height="47"><use href="#list"/></svg>
                <div class="absolute top-[-1px] right-[-2px] w-[29px] h-[17px] overflow-hidden rounded-[4px] border border-[#e08040] bg-[linear-gradient(#ff8c3a,#ff6a1a_55%,#f02a10_60%,#ff7a30)] text-white font-bold text-[11px] leading-[14px] whitespace-nowrap [font-family:'DejaVu_Serif',serif]">10</div>
              </div><div class="h-[20px] leading-[22px]">微订单</div></div>
            </div>

            <div class="ml-[20px] w-[728px] mt-[9px] text-[#444]">
              <div class="h-[28px] leading-[20px] text-[14px] font-bold border-b border-dashed border-[#ccc] pb-[6px]">账户情况：</div>
              <div class="h-[24px] mt-[4px] leading-[24px] flex items-center whitespace-pre">当前账户有点数<span class="text-[#f00]">128040</span>点（1元兑换10点）<svg class="mx-[1px]" width="14" height="14"><use href="#help"/></svg>。<a class="pl-[5px] text-[#0a8ce0] underline"><span class="tracking-[1.500px]">&gt;&gt;</span>立即获取点数</a></div>
              <div class="h-[24px] leading-[24px] flex items-center whitespace-pre">当前允许登录<span class="text-[#f00]">38</span>个客服， 已登录<span class="text-[#f00]">16</span>个，还能登录<span class="text-[#f00]">22</span>个。 <a class="ml-[2px] text-[#0a8ce0] underline"><span class="tracking-[1.500px]">&gt;&gt;</span>增加登录许可</a><svg class="ml-[4px]" width="14" height="14"><use href="#help"/></svg></div>
              <div class="h-[28px] mt-[12px] leading-[20px] text-[14px] font-bold border-b border-dashed border-[#ccc] pb-[6px]">流量情况：</div>
              <div class="h-[24px] mt-[5px] leading-[24px] flex items-center whitespace-pre">今日来访<span class="text-[#f00]">4662</span>人，访问<span class="text-[#f00]">4870</span>次<svg width="14" height="14"><use href="#help"/></svg>， 访问页面<span class="text-[#f00]">7866</span>个，平均每人访问<span class="text-[#f00]">1.6</span>页。 <a class="ml-[2px] text-[#0a8ce0] underline"><span class="tracking-[1.500px]">&gt;&gt;</span>查看流量报告</a></div>
            </div>
          </div>
          <!-- scrollbar -->
          <div class="w-[16px] ml-auto mr-[2px] bg-[#f0f0f0] flex flex-col items-center">
            <div class="h-[18px] flex items-center justify-center"><i class="w-0 h-0 border-x-[4px] border-x-transparent border-b-[5px] border-b-[#444]"></i></div>
            <div class="h-[189px] w-[15px] flex flex-col items-center justify-center gap-[2px] rounded-[2px] border border-[#999] bg-[linear-gradient(90deg,#f2f2f2,#c8c8cc)]">
              <span class="w-[7px] h-[1px] bg-[#666]"></span><span class="w-[7px] h-[1px] bg-[#666]"></span><span class="w-[7px] h-[1px] bg-[#666]"></span><span class="w-[7px] h-[1px] bg-[#666]"></span>
            </div>
            <div class="mt-auto h-[18px] flex items-center justify-center"><i class="w-0 h-0 border-x-[4px] border-x-transparent border-t-[5px] border-t-[#444]"></i></div>
          </div>
        </div>

        <!-- chat tools -->
        <div class="h-[28px] flex items-center pl-[8px] pt-[3px] border-y border-[#b8b8b8] text-[#222] bg-[linear-gradient(#f0f0f0,#d8d8d8)]">
          <svg width="16" height="14" viewBox="0 0 16 14"><path d="M0 8l5-3 2 2v4H1z" fill="#5ba33a"/><path d="M7 2h8v6l-2-1-3 3-2-2 3-3z" fill="#3a9ad8"/></svg>
          <span class="ml-[7px]">对话转移</span>
          <svg class="ml-[11px]" width="17" height="16" viewBox="0 0 17 16"><path d="M8.500 1L0 9h2.500v6h12V9H17z" fill="#c8321e"/><path d="M4 8l4.500-4L13 8v6H4z" fill="#f6f0e6"/><rect x="7" y="9" width="3" height="5" fill="#c8321e"/></svg>
          <span class="ml-[7px]">会议室</span>
          <svg class="ml-[17px]" width="20" height="18" viewBox="0 0 20 18"><rect x="1" y="1" width="13" height="13" fill="#dceaf6" stroke="#4a6a8a"/><rect x="6" y="5" width="13" height="12" fill="#fff" stroke="#5a7a5a"/><path d="M7 16l4-5 3 3 2-2 2 4z" fill="#5a9a3a"/></svg>
          <span class="ml-[1px]">传文件</span>
          <svg class="ml-[17px]" width="17" height="18" viewBox="0 0 17 18"><rect x="1" y="1" width="13" height="11" fill="#2a70d0" stroke="#3a4a7a"/><path d="M4 13h7v2H4z" fill="#6a7a9a"/><circle cx="10" cy="15" r="2" fill="none" stroke="#e08a10" stroke-width="1.500"/><circle cx="14" cy="15" r="2" fill="none" stroke="#e08a10" stroke-width="1.500"/></svg>
          <span class="ml-[4px]">截屏</span>
          <svg class="ml-[17px]" width="11" height="14" viewBox="0 0 11 14"><rect x=".5" y="4" width="10" height="9" fill="#f8d838" stroke="#8a7a20"/><rect x="2" y="1" width="4" height="4" fill="#f8d838" stroke="#8a7a20"/><path d="M4 7h5M4 10h5" stroke="#5a5010"/></svg>
          <span class="ml-[6px]">评价</span>
          <svg class="ml-[15px]" width="16" height="16" viewBox="0 0 16 16"><circle cx="8" cy="8" r="7.500" fill="#f0b030" stroke="#b87a20"/><path d="M3.500 8.500h9c0 3-2 5-4.500 5s-4.500-2-4.500-5z" fill="#fff" stroke="#8a5a10" stroke-width=".6"/><path d="M4 5.500h2.500M9.500 5.500H12" stroke="#6a4010" stroke-width="1.400"/></svg>
          <svg class="ml-[14px]" width="16" height="16" viewBox="0 0 16 16"><path d="M0 16v-1.500l1.500-.5L6.500 0h3l5 14 1.500.5V16h-6v-1.500l1.500-.5-1-3h-5l-1 3 1.500.5V16zM6 9h4L8 3.500z" fill="#0c6a38"/></svg>
        </div>

        <!-- input -->
        <div class="h-[84px] flex justify-end items-start pt-[13px] pr-[14px] bg-white">
          <div class="w-[81px] h-[49px] flex items-center justify-center rounded-l-[3px] border border-[#b4b4b4] text-[#333] text-[16px] tracking-[12px] pl-[12px] bg-[linear-gradient(#fafafa,#d4d4d4)] shadow-[1px_2px_2px_#bbb]">发送</div>
          <div class="w-[25px] h-[49px] flex items-center justify-center rounded-r-[3px] border border-[#d88c10] bg-[linear-gradient(#f8e4a0,#f8c840_50%,#ee9a10)] shadow-[1px_2px_2px_#bbb]"><i class="w-0 h-0 border-x-[5px] border-x-transparent border-t-[6px] border-t-[#6a3a10]"></i></div>
        </div>
        <div class="h-[44px] pt-[22px] bg-[linear-gradient(#f8f8f8,#c8c8c8)]">
          <div class="w-[705px] h-[20px] bg-[#d0d0d3]"></div>
        </div>
      </div>
    </div>
  </div>
</div>

<!-- status bar -->
<div class="h-[27px] flex items-center px-[10px] text-[#d8ecd4] bg-[linear-gradient(#1f5206,#123e02)] border-t border-[#0e3002]">
  <span class="w-[108px]">公司<span class="[font-family:'Liberation_Mono',monospace] text-[10px]">ID: 10025527</span></span>
  <span class="w-[96px]">身份<span class="[font-family:'Liberation_Mono',monospace] text-[10px]">: </span>普通客服</span>
  <span class="w-[132px]">客服<span class="[font-family:'Liberation_Mono',monospace] text-[10px]">ID: looyukefu006</span></span>
  <span>昵称<span class="[font-family:'Liberation_Mono',monospace] text-[10px]">: </span>王丽娟</span>
  <span class="ml-auto">版本号<span class="[font-family:'Liberation_Mono',monospace] text-[10px]">: 3.0.0.3</span></span>
  <span class="ml-[12px] mr-[9px] w-[104px] h-[17px] leading-[15px] text-center rounded-[8px] border border-[#a8b8a8] bg-[#123a06] text-white font-bold text-[12px] tracking-[.6px] shadow-[0_3px_8px_#10a020]">www.talk99.cn</span>
</div>
<div class="h-[3px] bg-[repeating-linear-gradient(90deg,#555_0,#555_60px,#ddd_60px,#ddd_110px)] border-t border-black"></div>

<!-- red annotation over the page -->
<div class="absolute left-[560px] top-[210px] w-[74px] h-[84px] border-[4px] border-[#f00]"></div>
<svg class="absolute left-[485px] top-[233px]" width="75" height="20" viewBox="0 0 75 20"><path d="M0 3.500L57 7V3l16 7-16 8v-5z" fill="#f00"/></svg>
</body>
</html>
